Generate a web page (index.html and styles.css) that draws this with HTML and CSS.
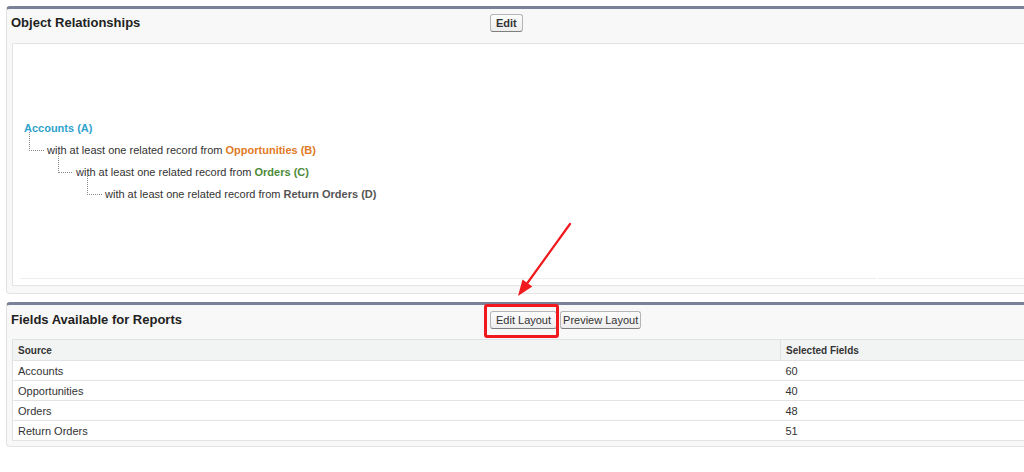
FILE: index.html
```html
<!DOCTYPE html>
<html>
<head>
<meta charset="utf-8">
<link rel="stylesheet" href="styles.css">
</head>
<body>
<div class="page">
  <section class="panel panel-rel">
    <div class="panel-head">
      <h2 class="panel-title">Object Relationships</h2>
      <div class="panel-btns"><button class="btn btn-bold">Edit</button></div>
    </div>
    <div class="rel-box">
      <div class="tree">
        <div class="node lvl0"><span class="obj obj-a">Accounts (A)</span></div>
        <div class="node lvl1"><span class="conn"></span>with at least one related record from <span class="obj obj-b">Opportunities (B)</span></div>
        <div class="node lvl2"><span class="conn"></span>with at least one related record from <span class="obj obj-c">Orders (C)</span></div>
        <div class="node lvl3"><span class="conn"></span>with at least one related record from <span class="obj obj-d">Return Orders (D)</span></div>
      </div>
      <div class="rel-foot"><span class="foot-a"></span><span class="foot-b"></span></div>
    </div>
  </section>

  <section class="panel panel-fields">
    <div class="panel-head">
      <h2 class="panel-title">Fields Available for Reports</h2>
      <div class="panel-btns">
        <button class="btn">Edit Layout</button>
        <button class="btn btn-narrow">Preview Layout</button>
      </div>
    </div>
    <table class="fields">
      <thead>
        <tr><th class="col-src">Source</th><th>Selected Fields</th></tr>
      </thead>
      <tbody>
        <tr><td>Accounts</td><td>60</td></tr>
        <tr><td>Opportunities</td><td>40</td></tr>
        <tr><td>Orders</td><td>48</td></tr>
        <tr><td>Return Orders</td><td>51</td></tr>
      </tbody>
    </table>
  </section>

  <div class="highlight"></div>
  <svg class="arrow" width="80" height="90" viewBox="0 0 80 90">
    <line x1="70" y1="9" x2="27.4" y2="68" stroke="#f0191e" stroke-width="2.2" stroke-linecap="round"/>
    <polygon points="18,81 22.5,64.5 32.3,71.5" fill="#f0191e"/>
  </svg>
</div>
</body>
</html>
```

FILE: styles.css
```css
* { box-sizing: border-box; }
html, body { margin: 0; padding: 0; background: #ffffff; }
body {
  font-family: "Liberation Sans", Arial, sans-serif;
  font-size: 11px;
  color: #333;
  width: 1024px;
  height: 472px;
  overflow: hidden;
}
.page {
  position: relative;
  padding: 6px 0 0 6px;
}
.panel {
  background: #f8f8f8;
  border-top: 3px solid #7a8199;
  border-left: 1px solid #e3e3e3;
  border-bottom: 1px solid #e3e3e3;
  border-radius: 4px 0 0 4px;
  width: 1030px;
}
.panel-rel { height: 288px; }
.panel-fields { margin-top: 8px; padding-bottom: 5px; }
.panel-head {
  display: flex;
  align-items: center;
  height: 34px;
  padding-bottom: 7px;
}
.panel-fields .panel-head { padding-bottom: 5px; }
.panel-title {
  margin: 0;
  width: 483px;
  padding-left: 4px;
  font-size: 13px;
  font-weight: bold;
  color: #222;
}
.panel-btns { display: flex; gap: 3px; }
.btn {
  font-family: "Liberation Sans", Arial, sans-serif;
  font-size: 11px;
  color: #333;
  background: linear-gradient(#fdfdfd, #ededed);
  border: 1px solid #b5b5b5;
  border-bottom-color: #7f7f7f;
  border-radius: 3px;
  padding: 2px 5px;
  height: 18px;
  line-height: 12px;
}
.btn-bold { font-weight: bold; }
.btn-narrow { padding: 2px 2px; }

.rel-box {
  margin-left: 5px;
  background: #fff;
  border: 1px solid #e3e3e3;
  border-right: none;
  height: 243px;
  display: flex;
  flex-direction: column;
}
.tree {
  flex: 1;
  padding: 77px 0 0 11px;
}
.node {
  position: relative;
  height: 22px;
  line-height: 15px;
  color: #333;
}
.obj { font-weight: bold; }
.obj-a { color: #2fa3cc; }
.obj-b { color: #e07a25; }
.obj-c { color: #4d8a3a; }
.obj-d { color: #555; }
.lvl1 { padding-left: 23px; }
.lvl2 { padding-left: 52px; }
.lvl3 { padding-left: 81px; }
.conn {
  position: absolute;
  top: -11px;
  height: 19px;
  border-left: 1px dotted #8a8a8a;
  border-bottom: 1px dotted #8a8a8a;
}
.lvl1 .conn { left: 5px; width: 15px; }
.lvl2 .conn { left: 34px; width: 14px; }
.lvl3 .conn { left: 63px; width: 15px; }

.rel-foot {
  display: flex;
  gap: 2px;
  padding: 0 0 6px 7px;
}
.foot-a { width: 856px; border-top: 1px solid #ececec; }
.foot-b { flex: 1; border-top: 1px solid #ececec; }

.fields {
  margin-left: 5px;
  width: 1020px;
  border-collapse: collapse;
  background: #fff;
  font-size: 11px;
  border-left: 1px solid #e0e3e5;
}
.fields th {
  background: #f2f3f3;
  text-align: left;
  font-weight: bold;
  font-size: 10px;
  color: #333;
  height: 21px;
  padding: 0 0 0 5px;
  border-top: 1px solid #e0e3e5;
  border-bottom: 1px solid #e0e3e5;
}
.fields th + th { border-left: 1px solid #e0e3e5; }
.fields .col-src { width: 768px; }
.fields td {
  height: 20px;
  padding: 0 0 0 5px;
  border-bottom: 1px solid #e3e3e3;
  color: #333;
}

.highlight {
  position: absolute;
  left: 484px;
  top: 304px;
  width: 75px;
  height: 34px;
  border: 3px solid #f0191e;
  border-radius: 3px;
}
.arrow {
  position: absolute;
  left: 500px;
  top: 215px;
}
```
